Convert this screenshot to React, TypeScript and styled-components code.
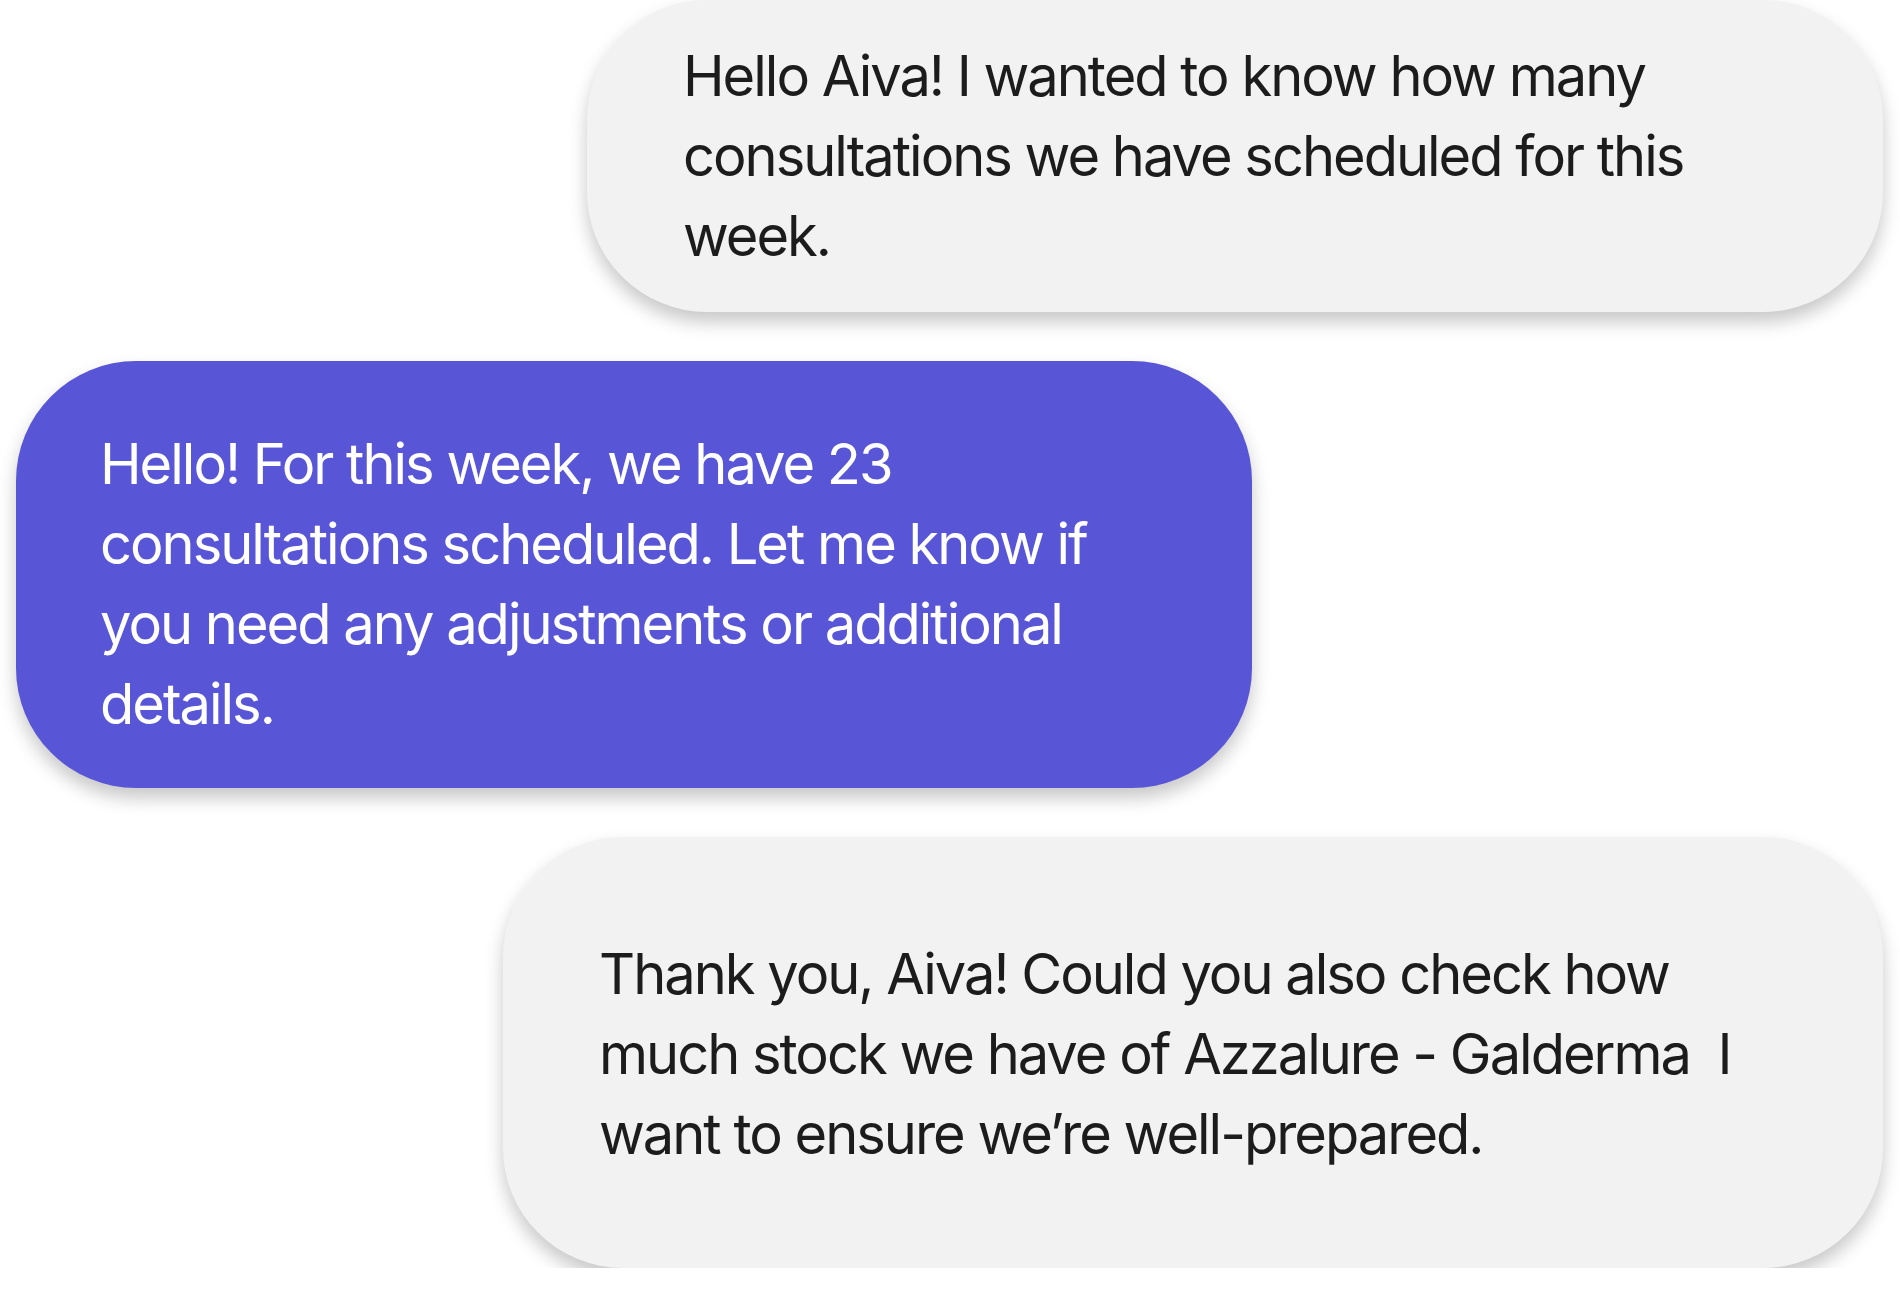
import React from "react";
import styled, { createGlobalStyle } from "styled-components";

const Global = createGlobalStyle`
  html, body {
    margin: 0;
    padding: 0;
    background: #ffffff;
  }
  body {
    font-family: Inter, "Noto Sans", "Liberation Sans", sans-serif;
  }
`;

const Thread = styled.div`
  display: flex;
  flex-direction: column;
  gap: 49px;
  padding: 0 17px 0 16px;
  width: 1900px;
  box-sizing: border-box;
`;

type BubbleProps = {
  $side: "left" | "right";
  $width: number;
  $pad: string;
  $variant: "user" | "bot";
};

const Bubble = styled.div<BubbleProps>`
  align-self: ${(p) => (p.$side === "right" ? "flex-end" : "flex-start")};
  width: ${(p) => p.$width}px;
  box-sizing: border-box;
  padding: ${(p) => p.$pad};
  border-radius: 120px;
  background: ${(p) => (p.$variant === "bot" ? "#5856D6" : "#F2F2F2")};
  color: ${(p) => (p.$variant === "bot" ? "#FFFFFF" : "#1C1C1C")};
  box-shadow: 0 10px 18px rgba(0, 0, 0, 0.22);
`;

const Message = styled.p`
  margin: 0;
  font-family: Inter, "Noto Sans", "Liberation Sans", sans-serif;
  font-size: 56px;
  line-height: 80px;
  font-weight: 400;
  letter-spacing: -2px;
`;

export default function App() {
  return (
    <>
      <Global />
      <Thread>
        <Bubble $side="right" $width={1296} $pad="36px 96px 36px 96px" $variant="user">
          <Message>
            Hello Aiva! I wanted to know how many consultations we have scheduled for this week.
          </Message>
        </Bubble>
        <Bubble $side="left" $width={1236} $pad="63px 84px 44px 84px" $variant="bot">
          <Message>
            Hello! For this week, we have 23 consultations scheduled. Let me know if you need any
            adjustments or additional details.
          </Message>
        </Bubble>
        <Bubble $side="right" $width={1380} $pad="97px 96px 94px 96px" $variant="user">
          <Message>
            Thank you, Aiva! Could you also check how much stock we have of Azzalure - Galderma{"\u00a0"} I
            want to ensure we’re well-prepared.
          </Message>
        </Bubble>
      </Thread>
    </>
  );
}
